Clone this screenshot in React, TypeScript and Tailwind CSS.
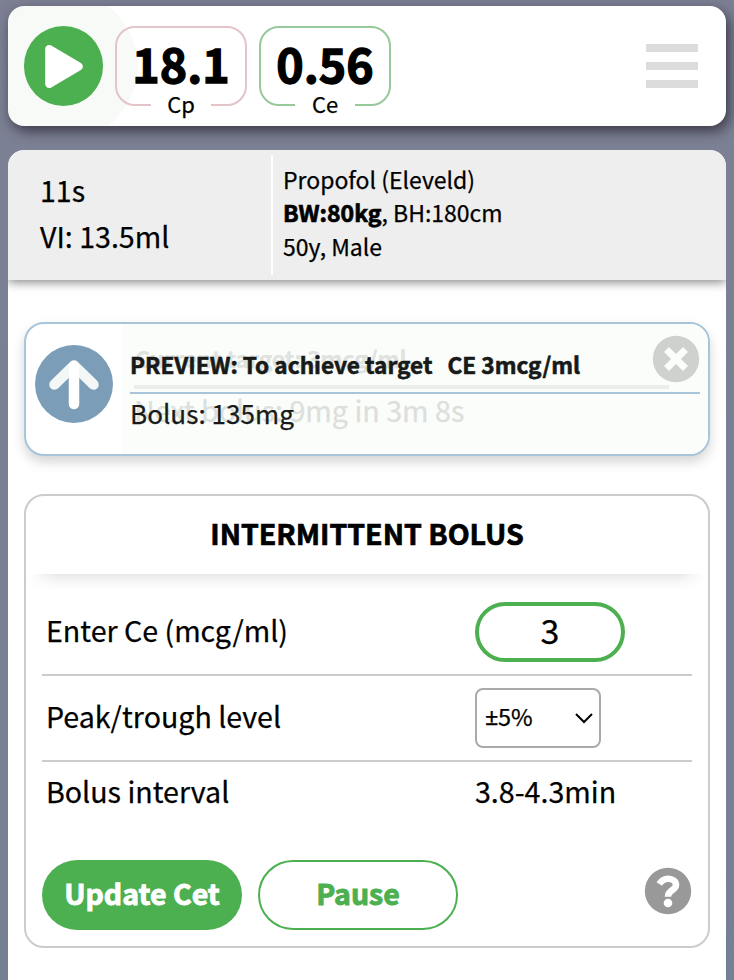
import type { ReactNode } from "react";
import { FaPlay } from "react-icons/fa";

function CloseIcon({ className }: { className: string }) {
  return (
    <svg viewBox="0 0 48 48" className={className}>
      <circle cx="24" cy="24" r="23.2" fill="currentColor" />
      <path d="M14.500 14.500 33.500 33.500M33.500 14.500 14.500 33.500" stroke="#fbfdfa" strokeWidth="7" />
    </svg>
  );
}

function HelpIcon({ className }: { className: string }) {
  return (
    <svg viewBox="0 0 48 48" className={className}>
      <circle cx="24" cy="24" r="23.2" fill="currentColor" />
      <path
        d="M15.300 17C17.600 13.400 20.300 11.800 24 11.800C29 11.800 32 14.500 32 18C32 23.500 24 22.600 24 29.800"
        fill="none"
        stroke="white"
        strokeWidth="6.6"
      />
      <circle cx="24" cy="36" r="4.3" fill="white" />
    </svg>
  );
}

function Gauge({ value, label, tone }: { value: string; label: string; tone: string }) {
  return (
    <div className={`relative h-20 w-[132px] rounded-[20px] border-2 ${tone}`}>
      <div className="-mt-px text-center text-[46.5px] leading-[72px] font-bold [-webkit-text-stroke:1.3px_currentColor]">
        {value}
      </div>
      <div className="absolute top-[60px] left-[34px] w-[60px] bg-white text-center text-[22px] leading-[30px]">
        {label}
      </div>
    </div>
  );
}

function Row({ label, className, children }: { label: string; className: string; children: ReactNode }) {
  return (
    <div className={`flex items-center pl-1 ${className}`}>
      <div className="w-[429px] pb-1 text-[28.6px] leading-[42px]">{label}</div>
      {children}
    </div>
  );
}

export default function App() {
  return (
    <div className="flex h-[980px] w-[734px] flex-col overflow-hidden bg-linear-to-b from-[#7d8094] to-[#768095] px-2 pt-[6px] font-['Noto_Sans_CJK_SC','Noto_Sans',sans-serif] text-black [-webkit-text-stroke:0.25px_currentColor]">
      <header className="flex h-[120px] shrink-0 items-start gap-3 rounded-2xl bg-white bg-[radial-gradient(circle_at_54px_60px,#f8faf7_75px,#ffffff_76px)] pt-5 pr-7 pl-4 shadow-[3px_5px_13px_0px_rgba(40,38,52,0.8)]">
        <button className="flex h-20 w-[79px] items-center justify-center rounded-full bg-[#4caf50] pl-px text-white">
          <FaPlay className="h-[43px] w-[38px]" />
        </button>
        <Gauge value="18.1" label="Cp" tone="border-[#e3c4c8]" />
        <Gauge value="0.56" label="Ce" tone="border-[#98c99b]" />
        <div className="mt-[18px] ml-auto flex w-[52px] flex-col gap-[10px]">
          <div className="h-2 bg-[#dcdcdc]" />
          <div className="h-2 bg-[#dcdcdc]" />
          <div className="h-2 bg-[#dcdcdc]" />
        </div>
      </header>

      <main className="mt-6 flex grow flex-col overflow-hidden rounded-t-2xl bg-white">
        <section className="flex h-[130px] shrink-0 items-center bg-[#eeeeee] shadow-[0_2px_10px_rgba(0,0,0,0.5)]">
          <div className="w-[263px] pb-1 pl-8 text-[28.6px] leading-[46px]">
            <div>11s</div>
            <div>VI: 13.5ml</div>
          </div>
          <div className="h-[120px] w-[2px] bg-white" />
          <div className="pb-1 pl-[10px] text-[23px] leading-[33.3px]">
            <div>Propofol (Eleveld)</div>
            <div>
              <b className="[-webkit-text-stroke:0.7px_currentColor]">BW:80kg</b>, BH:180cm
            </div>
            <div>50y, Male</div>
          </div>
        </section>

        <section className="mx-4 mt-[42px] flex h-[134px] shrink-0 rounded-[20px] border-2 border-[#a8c5da] bg-white shadow-[0_6px_12px_rgba(0,0,0,0.17)]">
          <div className="w-24 pt-[21px] pl-[9px]">
            <svg viewBox="0 0 78 78" className="size-[78px]">
              <circle cx="39" cy="39" r="39" fill="#7b9db7" />
              <g fill="none" strokeWidth="10.5" strokeLinecap="round" strokeLinejoin="round">
                <path d="M19.5 39.5 39 20.5 58.5 39.5" stroke="#f3f7f5" />
                <path d="M39 21V59" stroke="#ffffff" />
              </g>
            </svg>
          </div>
          <div className="relative grow rounded-r-[18px] bg-[#fbfdfa] pt-5 pr-2 pl-2">
            <div className="absolute top-[61px] left-3 h-1 w-[535px] bg-[#e9eeeb]" />
            <div className="absolute top-[17px] left-[13px] text-[22.8px] leading-[36px] font-bold text-[#dfe2df]">
              Current target: 3mcg/ml
            </div>
            <div className="absolute top-[65px] left-3 text-[28.65px] leading-[42px] text-[#dcdfdc]">
              Next bolus: 9mg in 3m 8s
            </div>
            <div className="relative flex h-[50px] border-b-2 border-[#a8c5da] text-[22.6px] leading-[41px] font-bold text-[#171a18] [-webkit-text-stroke:0.6px_currentColor]">
              <span>PREVIEW: To achieve target</span>
              <span className="ml-[15px]">CE 3mcg/ml</span>
            </div>
            <div className="relative text-[26.1px] leading-[38px] text-[#171a18]">Bolus: 135mg</div>
            <CloseIcon className="absolute top-[11px] right-2 size-12 text-[#cfd1cf]" />
          </div>
        </section>

        <section className="mx-4 mt-[38px] h-[454px] shrink-0 rounded-[20px] border-2 border-[#cccccc]">
          <h2 className="h-[78px] text-center text-[28.5px] leading-[73px] font-bold [-webkit-text-stroke:0.7px_currentColor]">
            INTERMITTENT BOLUS
          </h2>
          <div className="mx-1 h-4 bg-linear-to-b from-[#e8e8e8] via-[#f7f7f7] to-white mask-x-from-96% mask-x-to-100%" />
          <div className="px-4">
            <Row label="Enter Ce (mcg/ml)" className="-mt-1 h-[90px] border-b-2 border-[#cccccc] pt-[3px]">
              <div className="flex h-[60px] w-[150px] items-center justify-center rounded-full border-4 border-[#4caf50] pb-[3px] text-[34px] leading-none">
                3
              </div>
            </Row>
            <Row label="Peak/trough level" className="h-[86px] border-b-2 border-[#cccccc]">
              <div className="flex h-[60px] w-[126px] items-center justify-between rounded-lg border-2 border-[#aaaaaa] pr-[6px] pl-2 text-[23.5px] leading-none">
                <span className="flex pb-[3px]">
                  <span className="w-[13px] font-['Noto_Sans']">±</span>5%
                </span>
                <svg viewBox="0 0 18 12" className="h-3 w-[18px]">
                  <path d="M1 2 9 10 17 2" fill="none" stroke="black" strokeWidth="2" />
                </svg>
              </div>
            </Row>
            <Row label="Bolus interval" className="h-[62px]">
              <div className="pb-1 text-[28.6px] leading-[42px]">3.8-4.3min</div>
            </Row>
            <div className="mt-9 flex items-start gap-4 text-[28.5px] leading-none font-bold">
              <button className="h-[70px] w-[200px] rounded-full bg-[#4caf50] pb-1 text-white [-webkit-text-stroke:0.9px_currentColor]">
                Update Cet
              </button>
              <button className="h-[70px] w-[200px] rounded-full border-2 border-[#4caf50] pb-1 text-[#4caf50] [-webkit-text-stroke:0.9px_currentColor]">
                Pause
              </button>
              <HelpIcon className="mt-[7px] ml-auto size-12 text-[#999999]" />
            </div>
          </div>
        </section>
      </main>
    </div>
  );
}
